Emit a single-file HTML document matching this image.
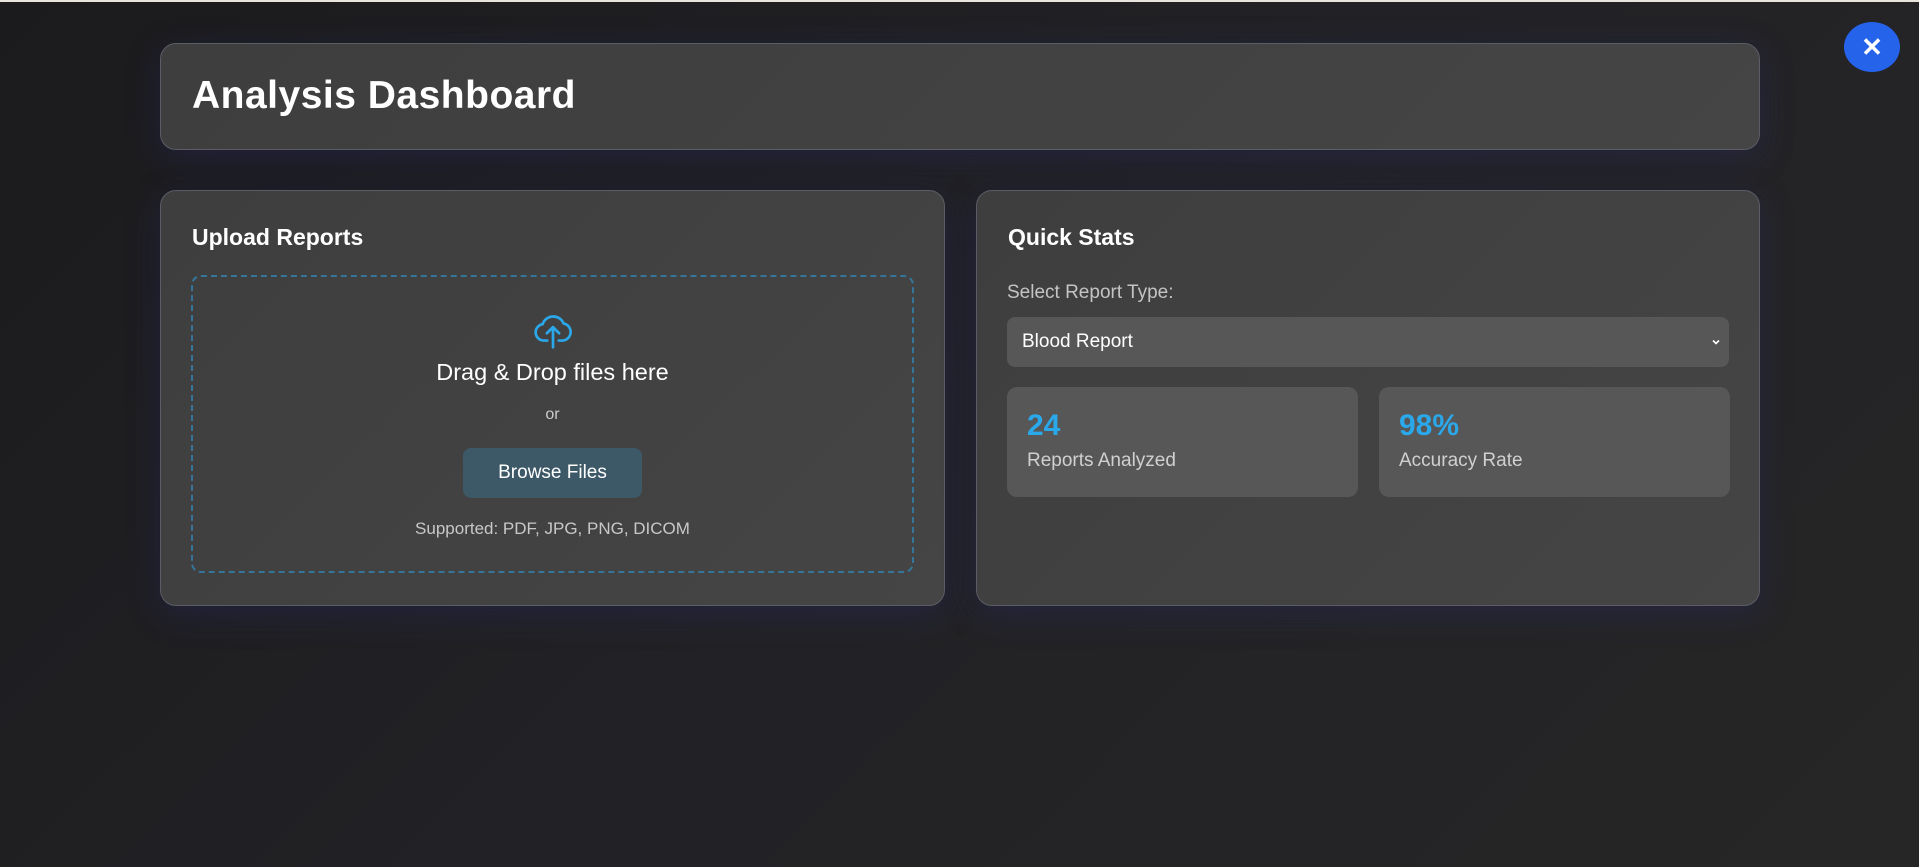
<!DOCTYPE html>
<html><head><meta charset="utf-8"><style>
*{box-sizing:border-box;margin:0;padding:0}
html,body{width:1919px;height:867px;overflow:hidden}
body{background:linear-gradient(135deg,#1b1b1d 0%,#222226 50%,#262626 100%);font-family:"Liberation Sans",sans-serif;position:relative;border-top:2px solid #e8e6dc}
.card{position:absolute;background:linear-gradient(135deg,#3e3e3e,#454545);border:1px solid #5c5c66;border-radius:16px;box-shadow:0 8px 32px rgba(40,40,110,0.35)}
h1{position:absolute;left:31px;top:30px;font-size:39px;color:#fff;font-weight:bold;letter-spacing:0.5px}
h2{position:absolute;left:31px;top:33px;font-size:23px;color:#fff;font-weight:bold}
.drop{position:absolute;left:30px;top:84px;width:723px;height:298px;border:2px dashed #36759a;border-radius:10px;text-align:center;color:#fff}
.btn{position:absolute;left:270px;top:171px;width:179px;height:50px;background:#3d5866;border-radius:8px;color:#fff;font-size:19px;line-height:50px}
.stat{position:absolute;top:195px;width:351px;height:110px;background:#575757;border-radius:10px}
.num{position:absolute;left:20px;top:22px;font-size:30px;font-weight:bold;color:#2aa8ea}
.lbl{position:absolute;left:20px;top:63px;font-size:19px;color:#d0d0d0}
</style></head><body>
<div class="card" style="left:160px;top:41px;width:1600px;height:107px"><h1>Analysis Dashboard</h1></div>

<div class="card" style="left:160px;top:188px;width:785px;height:416px">
<h2>Upload Reports</h2>
<div class="drop">
<svg style="position:absolute;left:336px;top:30px" width="48" height="46" viewBox="0 0 24 24" fill="none" stroke="#2aa8ea" stroke-width="1.4" stroke-linecap="round" stroke-linejoin="round"><path d="M12 21V10.5M8.8 13.7L12 10.5l3.2 3.2"/><path d="M9 17.5H7.2a4.3 4.3 0 0 1-.6-8.55A5.8 5.8 0 0 1 17.5 8.6a4.5 4.5 0 0 1-.3 8.9H15"/></svg>
<div style="position:absolute;left:0;right:0;top:82px;font-size:23.5px">Drag &amp; Drop files here</div>
<div style="position:absolute;left:0;right:0;top:129px;font-size:16px;color:#ccc">or</div>
<div class="btn">Browse Files</div>
<div style="position:absolute;left:0;right:0;top:242px;font-size:17px;color:#c8c8c8">Supported: PDF, JPG, PNG, DICOM</div>
</div>
</div>

<div class="card" style="left:976px;top:188px;width:784px;height:416px">
<h2>Quick Stats</h2>
<div style="position:absolute;left:30px;top:91px;font-size:19px;color:#c4c4c4">Select Report Type:</div>
<div style="position:absolute;left:30px;top:126px;width:722px;height:50px;background:#575757;border-radius:8px;color:#fff;font-size:19px;line-height:50px;padding-left:15px">Blood Report<svg style="position:absolute;right:8px;top:20px" width="10" height="10" viewBox="0 0 10 10"><path d="M2 3.5L5 6.5 8 3.5" fill="none" stroke="#fff" stroke-width="1.6"/></svg></div>
<div class="stat" style="left:30px;top:196px"><div class="num">24</div><div class="lbl">Reports Analyzed</div></div>
<div class="stat" style="left:402px;top:196px"><div class="num">98%</div><div class="lbl">Accuracy Rate</div></div>
</div>

<div style="position:absolute;left:1844px;top:20px;width:56px;height:50px;border-radius:50%;background:#2563eb;color:#fff;font-size:26px;font-weight:bold;text-align:center;line-height:50px">&#10005;</div>
</body></html>
